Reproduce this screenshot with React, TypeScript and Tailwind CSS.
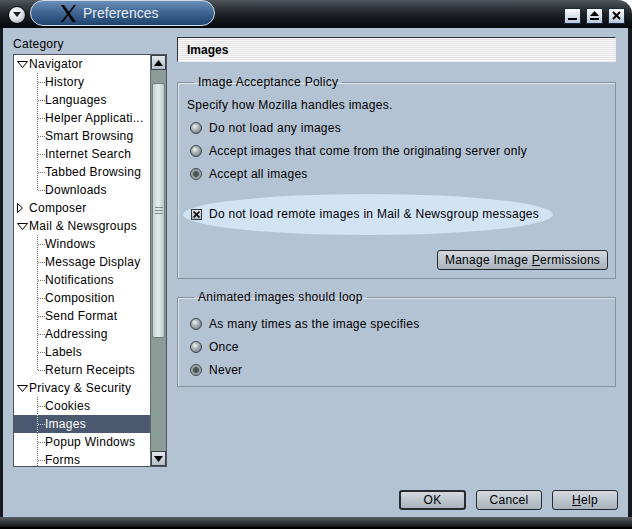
import React from 'react';

type Node = { label: string; kind: 'open' | 'closed' | 'child'; last?: boolean; selected?: boolean };

const tree: Node[] = [
  { label: 'Navigator', kind: 'open' },
  { label: 'History', kind: 'child' },
  { label: 'Languages', kind: 'child' },
  { label: 'Helper Applicati...', kind: 'child' },
  { label: 'Smart Browsing', kind: 'child' },
  { label: 'Internet Search', kind: 'child' },
  { label: 'Tabbed Browsing', kind: 'child' },
  { label: 'Downloads', kind: 'child', last: true },
  { label: 'Composer', kind: 'closed' },
  { label: 'Mail & Newsgroups', kind: 'open' },
  { label: 'Windows', kind: 'child' },
  { label: 'Message Display', kind: 'child' },
  { label: 'Notifications', kind: 'child' },
  { label: 'Composition', kind: 'child' },
  { label: 'Send Format', kind: 'child' },
  { label: 'Addressing', kind: 'child' },
  { label: 'Labels', kind: 'child' },
  { label: 'Return Receipts', kind: 'child', last: true },
  { label: 'Privacy & Security', kind: 'open' },
  { label: 'Cookies', kind: 'child' },
  { label: 'Images', kind: 'child', selected: true },
  { label: 'Popup Windows', kind: 'child' },
  { label: 'Forms', kind: 'child' },
];

const TreeRow: React.FC<{ node: Node }> = ({ node }) => {
  const sel = node.selected;
  if (node.kind === 'child') {
    return (
      <div className={`h-[18px] flex items-center ${sel ? 'bg-[#4a5870] text-white' : ''}`}>
        <svg width="31" height="18" className="shrink-0">
          <line x1="23.5" y1="0" x2="23.5" y2={node.last ? 9 : 18} stroke={sel ? '#c8d0dc' : '#707070'} strokeDasharray="1 1" />
          <line x1="24" y1="9.5" x2="31" y2="9.5" stroke={sel ? '#c8d0dc' : '#707070'} strokeDasharray="1 1" />
        </svg>
        <span className="leading-[18px] whitespace-nowrap">{node.label}</span>
      </div>
    );
  }
  return (
    <div className="h-[18px] flex items-center">
      <svg width="15" height="18" className="shrink-0">
        {node.kind === 'open' ? (
          <polygon points="3.5,6.5 13.5,6.5 8.5,12.5" fill="none" stroke="#000" strokeWidth="1" />
        ) : (
          <polygon points="3.5,4.5 3.5,13.5 8.5,9" fill="none" stroke="#000" strokeWidth="1" />
        )}
      </svg>
      <span className="leading-[18px] whitespace-nowrap">{node.label}</span>
    </div>
  );
};

const Scrollbar: React.FC = () => (
  <div className="w-[16px] shrink-0 flex flex-col bg-[#8b9c97] border-l border-[#5d6a68]">
    <div className="h-[15px] shrink-0 border border-[#3b4147] bg-gradient-to-b from-[#e4e9ee] to-[#b3bec8] flex items-center justify-center">
      <svg width="9" height="6"><polygon points="0,6 9,6 4.5,0" fill="#000" /></svg>
    </div>
    <div className="h-[13px] shrink-0" />
    <div className="h-[255px] shrink-0 mx-[1px] rounded-[2px] border border-[#6f7f7e] bg-gradient-to-r from-[#c5d3d3] via-[#e4ecec] to-[#b9c8c8] flex items-center justify-center">
      <svg width="8" height="10">
        <line x1="0" y1="1.5" x2="8" y2="1.5" stroke="#7d8c8c" />
        <line x1="0" y1="4.5" x2="8" y2="4.5" stroke="#7d8c8c" />
        <line x1="0" y1="7.5" x2="8" y2="7.5" stroke="#7d8c8c" />
      </svg>
    </div>
    <div className="flex-1" />
    <div className="h-[15px] shrink-0 border border-[#3b4147] bg-gradient-to-b from-[#e4e9ee] to-[#b3bec8] flex items-center justify-center">
      <svg width="9" height="6"><polygon points="0,0 9,0 4.5,6" fill="#000" /></svg>
    </div>
  </div>
);

const Radio: React.FC<{ checked?: boolean }> = ({ checked }) =>
  checked ? (
    <span className="w-[12px] h-[12px] rounded-full shrink-0 border border-[#3a4248] bg-[radial-gradient(circle,#4a5754_0%,#4a5754_36%,#8e989c_46%,#c6cdd0_100%)]" />
  ) : (
    <span className="w-[12px] h-[12px] rounded-full shrink-0 border border-[#3a4248] bg-[radial-gradient(circle_at_40%_35%,#f2f2f2_0%,#b3babd_35%,#646c71_100%)]" />
  );

const RadioRow: React.FC<{ label: string; checked?: boolean }> = ({ label, checked }) => (
  <div className="h-[23px] flex items-center pl-[3px] gap-[7px]">
    <Radio checked={checked} />
    <span>{label}</span>
  </div>
);

const Button: React.FC<{ children: React.ReactNode; className?: string; isDefault?: boolean }> = ({ children, className, isDefault }) => (
  <button
    className={`h-[20px] rounded-[3px] ${isDefault ? 'border-2' : 'border'} border-[#262b30] bg-gradient-to-b from-[#d3d9df] to-[#a9b3bd] text-[12px] tracking-[0.27px] text-black flex items-center justify-center ${className ?? ''}`}
  >
    {children}
  </button>
);

const XLogo: React.FC = () => (
  <svg width="15" height="17" viewBox="0 0 15 17">
    <polygon points="0,0 3,0 15,17 11.5,17" fill="#000" />
    <polygon points="13,0 15,0 2,17 0,17" fill="#000" />
  </svg>
);

export default function App() {
  return (
    <div className="w-[632px] h-[529px] flex flex-col bg-white text-[12px] text-black" style={{ fontFamily: '"Liberation Sans", Arial, sans-serif' }}>
      {/* title bar */}
      <div className="h-[28px] shrink-0 rounded-tr-[14px] bg-gradient-to-b from-[#50565c] via-[#1e2227] to-[#05070a] flex items-center pl-[8px] pr-[7px]">
        <div className="w-[18px] h-[18px] rounded-full border border-[#000] bg-[radial-gradient(circle_at_40%_35%,#ffffff_0%,#e2e6ea_45%,#8e98a2_100%)] flex items-center justify-center mt-[2px]">
          <svg width="8" height="6"><polygon points="0,0 8,0 4,5" fill="#1b1f24" /></svg>
        </div>
        <div className="ml-[4px] w-[185px] h-[26px] -mt-[2px] rounded-full border-[1.5px] border-[#d2dbe6] bg-gradient-to-b from-[#6a8fb9] via-[#3d6391] to-[#1f446e] flex items-center pl-[30px] gap-[7px]">
          <XLogo />
          <span className="text-[14px] text-[#e4eaf1]">Preferences</span>
        </div>
        <div className="flex-1" />
        <div className="flex gap-[5px] mt-[3px]">
          {['min', 'max', 'close'].map((k) => (
            <div key={k} className="w-[17px] h-[16px] border border-[#1a2a3e] bg-gradient-to-b from-[#ffffff] to-[#b6c6da] flex items-center justify-center">
              {k === 'min' && <svg width="9" height="9"><rect x="0" y="7" width="9" height="2" fill="#000" /></svg>}
              {k === 'max' && (
                <svg width="9" height="9">
                  <polygon points="0,5 9,5 4.5,0" fill="#000" />
                  <rect x="0" y="7" width="9" height="2" fill="#000" />
                </svg>
              )}
              {k === 'close' && (
                <svg width="9" height="9">
                  <line x1="1" y1="1" x2="8" y2="8" stroke="#000" strokeWidth="2" />
                  <line x1="8" y1="1" x2="1" y2="8" stroke="#000" strokeWidth="2" />
                </svg>
              )}
            </div>
          ))}
        </div>
      </div>

      {/* body */}
      <div className="flex-1 flex flex-col bg-[#b4c3d4] border-l-[3px] border-r-[4px] border-[#15181c] pb-[7px] tracking-[0.27px]">
        <div className="flex pl-[10px] pt-[9px] gap-[10px]">
          {/* left column */}
          <div className="w-[154px] flex flex-col">
            <div className="h-[14px] leading-[14px]">Category</div>
            <div className="mt-[3px] h-[413px] border border-[#4d545b] bg-white flex overflow-hidden">
              <div className="flex-1 overflow-hidden">
                {tree.map((n) => (
                  <TreeRow key={n.label} node={n} />
                ))}
              </div>
              <Scrollbar />
            </div>
          </div>

          {/* right column */}
          <div className="w-[439px] flex flex-col">
            <div className="h-[25px] border border-t-[#2e3338] border-l-[#2e3338] border-b-[#e8ecf0] border-r-[#e8ecf0] bg-[repeating-linear-gradient(to_bottom,#f8f8f8_0px,#f8f8f8_1px,#e4e4e4_1px,#e4e4e4_2px)] flex items-center pl-[9px]">
              <span className="font-bold tracking-normal">Images</span>
            </div>

            <fieldset className="mt-[13px] border border-[#8793a1] shadow-[inset_1px_1px_0_#dce4ec] pl-[9px] pr-[7px] pb-[8px]">
              <legend className="ml-[7px] px-[4px] leading-[14px]">Image Acceptance Policy</legend>
              <div className="pt-[5px]">
                <div className="h-[22px] flex items-center">Specify how Mozilla handles images.</div>
                <RadioRow label="Do not load any images" />
                <RadioRow label="Accept images that come from the originating server only" />
                <RadioRow label="Accept all images" checked />
                <div className="relative mt-[18px] h-[22px] flex items-center">
                  <div className="absolute left-[-4px] top-[-9px] w-[370px] h-[41px] rounded-[50%] bg-[#d3e3f6]" />
                  <div className="relative flex items-center pl-[4px] gap-[7px]">
                    <span className="w-[11px] h-[11px] border border-[#30363c] bg-gradient-to-b from-[#e4e8ec] to-[#aeb6be] flex items-center justify-center">
                      <svg width="7" height="7">
                        <line x1="0.5" y1="0.5" x2="6.5" y2="6.5" stroke="#111" strokeWidth="1.6" />
                        <line x1="6.5" y1="0.5" x2="0.5" y2="6.5" stroke="#111" strokeWidth="1.6" />
                      </svg>
                    </span>
                    <span>Do not load remote images in Mail &amp; Newsgroup messages</span>
                  </div>
                </div>
                <div className="mt-[25px] flex justify-end">
                  <Button className="w-[171px]">
                    <span>
                      Manage Image <span className="underline">P</span>ermissions
                    </span>
                  </Button>
                </div>
              </div>
            </fieldset>

            <fieldset className="mt-[11px] border border-[#8793a1] shadow-[inset_1px_1px_0_#dce4ec] pl-[9px] pb-[5px]">
              <legend className="ml-[7px] px-[4px] leading-[14px]">Animated images should loop</legend>
              <div className="pt-[8px]">
                <RadioRow label="As many times as the image specifies" />
                <RadioRow label="Once" />
                <RadioRow label="Never" checked />
              </div>
            </fieldset>
          </div>
        </div>

        <div className="flex-1" />

        <div className="flex justify-end gap-[10px] pr-[10px]">
          <Button className="w-[67px]" isDefault>OK</Button>
          <Button className="w-[66px]">Cancel</Button>
          <Button className="w-[66px]">
            <span>
              <span className="underline">H</span>elp
            </span>
          </Button>
        </div>
      </div>

      {/* bottom frame */}
      <div className="h-[12px] shrink-0 bg-gradient-to-b from-[#5a6066] to-[#111417] border-b-[2px] border-black" />
    </div>
  );
}
